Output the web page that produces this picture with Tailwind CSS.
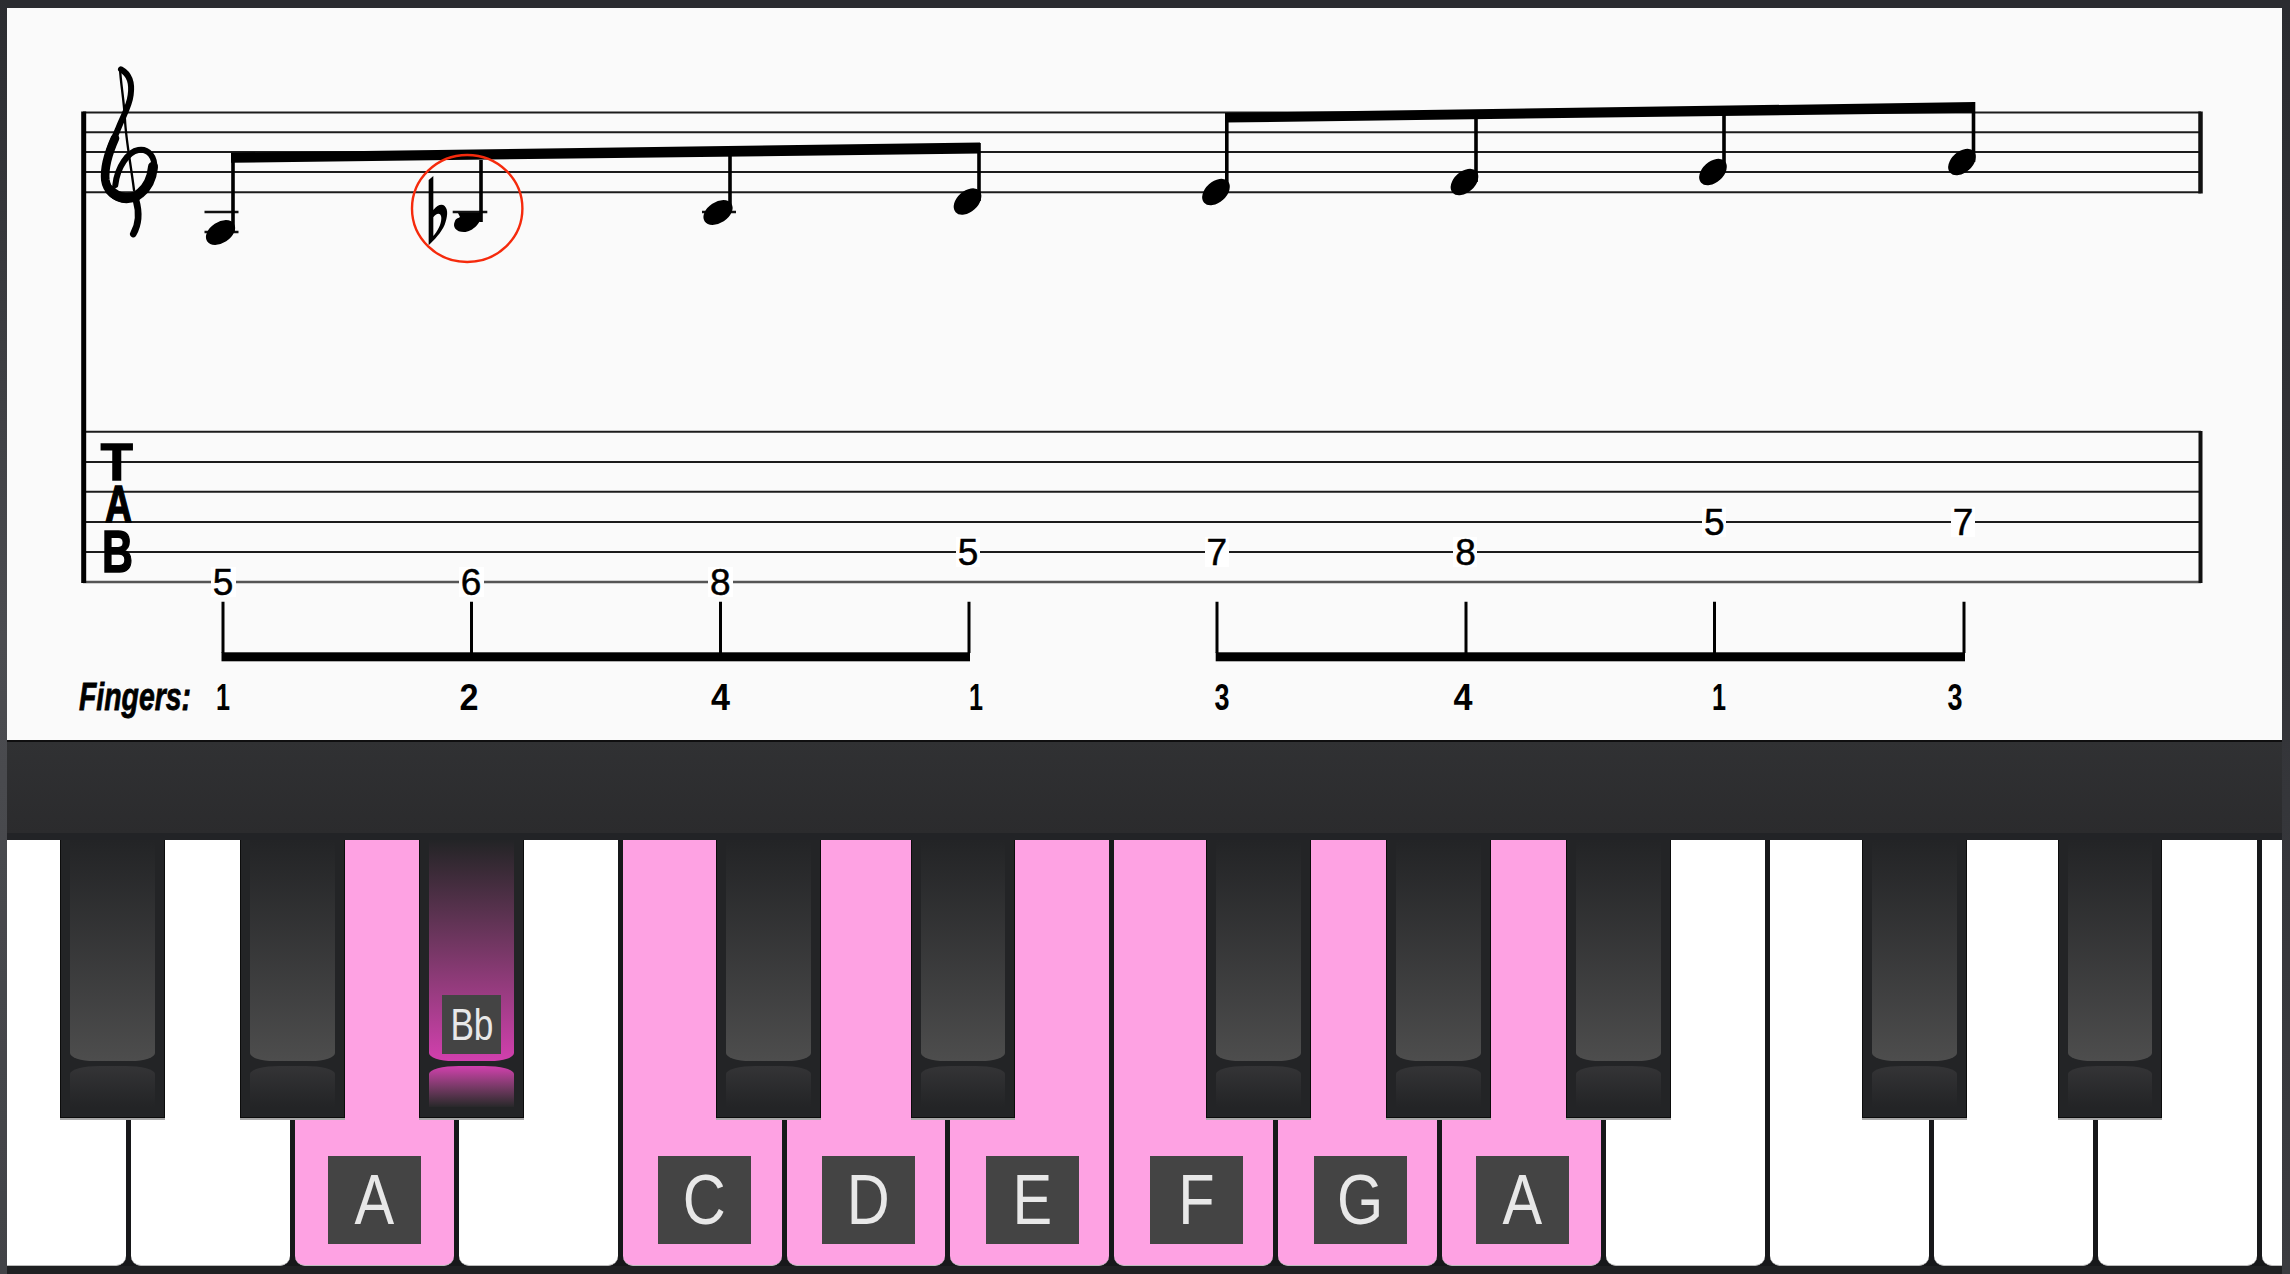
<!DOCTYPE html>
<html lang="en">
<head>
<meta charset="utf-8">
<title>A minor scale</title>
<script src="https://cdn.jsdelivr.net/npm/@tailwindcss/browser@4"></script>
</head>
<body class="bg-[#2b2c30]">
<div class="flex h-[1274px] w-[2290px] overflow-hidden bg-[#2b2c30] font-['Liberation_Sans',sans-serif]">
  <div class="w-[7px] shrink-0 bg-linear-to-b from-[#2b2c30] via-[#4b4c50] to-[#424347]"></div>
  <main class="flex w-[2275px] shrink-0 flex-col">
    <div class="h-[8px] bg-[#2b2c30]"></div>
    <section class="h-[734px] border-b-2 border-[#0f0f10] bg-[#fafafa]">
      <svg class="block h-[732px] w-[2275px] font-['Liberation_Sans',sans-serif]" viewBox="7 8 2275 732" xmlns="http://www.w3.org/2000/svg">
        <!-- staff -->
        <g stroke="#1c1c1c" stroke-width="2">
          <path d="M83 112.5H2201M83 132.3H2201M83 152H2201M83 172H2201M83 192.3H2201"/>
          <path d="M83 431.7H2201M83 462H2201M83 491.7H2201M83 522H2201M83 552H2201"/>
          <path stroke="#555" stroke-width="2.5" d="M83 582H2201"/>
        </g>
        <path d="M83.7 111.5V583" stroke="#000" stroke-width="5"/>
        <path d="M2200.5 111.5V193.5" stroke="#111" stroke-width="4.5"/>
        <path d="M2200.5 431V583" stroke="#111" stroke-width="4"/>
        <!-- clef -->
        <g transform="translate(60,50) scale(.3333)" fill="none" stroke="#000" stroke-linecap="round" stroke-linejoin="round">
          <path stroke-width="18" d="M183 58C208 72 217 100 212 135C208 170 190 195 173 240C160 270 150 290 145 310"/>
          <path stroke-width="26" d="M165 265C145 310 132 350 136 390C140 420 165 445 200 447"/>
          <path stroke-width="30" d="M150 420C175 448 215 452 240 430C265 410 276 380 279 350"/>
          <path stroke-width="18" d="M283 360C287 320 265 295 235 300C205 305 172 350 166 405"/>
          <path stroke-width="7" d="M180 55C182 100 192 150 195 210C198 270 212 340 222 420"/>
          <path stroke-width="20" d="M228 450C238 485 238 520 220 552"/>
        </g>
        <!-- ledger lines -->
        <path d="M204.5 212H238.5M204.5 232H238.5M452.7 212H487.3M702 212H736" stroke="#111" stroke-width="2.5"/>
        <!-- beams -->
        <path d="M231 152.7L980 142.5V153.5L231 162.7Z"/>
        <path d="M1225 113L1975 102V112.7L1225 122.5Z"/>
        <!-- stems -->
        <path d="M233 153V232M481 160V222M730 150V212M979 143V201M1226.8 113V192M1476 118V182M1724 113V172M1973.5 102V162" stroke="#000" stroke-width="3.6"/>
        <!-- note heads -->
        <g>
          <ellipse cx="220.5" cy="232.5" rx="16" ry="10.5" transform="rotate(-33 220.5 232.5)"/>
          <path d="M458 213H482C482 222 473 232 464 232C456 232 452 227 455 221C456 218 459 218 460 217Z"/>
          <ellipse cx="718" cy="212.5" rx="16" ry="10.5" transform="rotate(-33 718 212.5)"/>
          <ellipse cx="967.5" cy="201.5" rx="16" ry="10.5" transform="rotate(-42 967.5 201.5)"/>
          <ellipse cx="1216" cy="192" rx="16" ry="10.5" transform="rotate(-42 1216 192)"/>
          <ellipse cx="1464.5" cy="182" rx="16" ry="10.5" transform="rotate(-42 1464.5 182)"/>
          <ellipse cx="1713" cy="172" rx="16" ry="10.5" transform="rotate(-42 1713 172)"/>
          <ellipse cx="1962" cy="162" rx="16" ry="10.5" transform="rotate(-42 1962 162)"/>
        </g>
        <!-- flat -->
        <g transform="translate(380,130) scale(.3333)">
          <path fill-rule="evenodd" d="M146 150L160 138V240C172 224 186 220 194 228C206 240 202 262 194 284C184 308 162 330 146 346ZM160 262V318C172 304 184 284 184 264C184 248 170 246 160 262Z"/>
        </g>
        <!-- red circle -->
        <ellipse cx="467.2" cy="208.5" rx="55.2" ry="53.5" fill="none" stroke="#f52a0c" stroke-width="2.4"/>
        <!-- TAB -->
        <g fill="#000" stroke="#000" stroke-width="1.5" font-weight="700">
          <text x="100.7" y="480" font-size="52" textLength="32" lengthAdjust="spacingAndGlyphs">T</text>
          <text x="105" y="521.7" font-size="51" textLength="27" lengthAdjust="spacingAndGlyphs">A</text>
          <text x="102" y="571.7" font-size="60" textLength="31" lengthAdjust="spacingAndGlyphs">B</text>
        </g>
        <!-- tab digit plates -->
        <g fill="#fff">
          <rect x="211" y="567" width="25" height="30"/><rect x="459" y="567" width="25" height="30"/><rect x="708" y="567" width="25" height="30"/>
          <rect x="956" y="537" width="24" height="30"/><rect x="1205" y="537" width="24" height="30"/><rect x="1453" y="537" width="24" height="30"/>
          <rect x="1702" y="507" width="24" height="30"/><rect x="1951" y="507" width="24" height="30"/>
        </g>
        <g fill="#000" stroke="#000" stroke-width="0.5" font-size="37" text-anchor="middle">
          <text x="223" y="595">5</text>
          <text x="471" y="595">6</text>
          <text x="720.3" y="595">8</text>
          <text x="968" y="565">5</text>
          <text x="1216.7" y="565">7</text>
          <text x="1465.5" y="565">8</text>
          <text x="1714.3" y="535">5</text>
          <text x="1963" y="535">7</text>
        </g>
        <!-- brackets -->
        <path d="M223 601.7V653M471.5 601.7V653M720.5 601.7V653M969 601.7V653M1217 601.7V653M1466 601.7V653M1714.5 601.7V653M1964 601.7V653" stroke="#000" stroke-width="3"/>
        <rect x="221.5" y="652.3" width="748.5" height="9"/>
        <rect x="1215.7" y="652.3" width="749.3" height="9"/>
        <!-- fingers -->
        <text x="79" y="710" font-size="39" font-weight="700" font-style="italic" stroke="#000" stroke-width="0.8" textLength="112" lengthAdjust="spacingAndGlyphs">Fingers:</text>
        <g font-size="37" font-weight="700" text-anchor="middle">
          <text x="223" y="710" textLength="14" lengthAdjust="spacingAndGlyphs">1</text>
          <text x="469" y="710" textLength="19" lengthAdjust="spacingAndGlyphs">2</text>
          <text x="720.5" y="710" textLength="19" lengthAdjust="spacingAndGlyphs">4</text>
          <text x="976" y="710" textLength="14" lengthAdjust="spacingAndGlyphs">1</text>
          <text x="1222" y="710" textLength="15" lengthAdjust="spacingAndGlyphs">3</text>
          <text x="1463" y="710" textLength="19" lengthAdjust="spacingAndGlyphs">4</text>
          <text x="1719" y="710" textLength="14" lengthAdjust="spacingAndGlyphs">1</text>
          <text x="1955" y="710" textLength="15" lengthAdjust="spacingAndGlyphs">3</text>
        </g>
      </svg>
    </section>
    <div class="h-[91px] bg-linear-to-b from-[#303133] to-[#2b2b2d]"></div>
    <div class="h-[7px] bg-[#222326]"></div>

    <!-- keyboard -->
    <section class="relative h-[426px] overflow-hidden bg-[#17181a]">
      <div class="ml-[-39.9px] flex h-full w-[2500px] gap-[5px] text-[#e8e8e8]">
        <div class="h-full w-[158.9px] shrink-0 rounded-b-[10px] border-b border-[#bbb] bg-white"></div>
        <div class="h-full w-[158.9px] shrink-0 rounded-b-[10px] border-b border-[#bbb] bg-white"></div>
        <div class="flex h-full w-[158.9px] shrink-0 items-end justify-center rounded-b-[10px] border-b border-[#bbb] bg-[#fea2e3] pb-[21px]">
          <span class="flex h-[88px] w-[93px] items-center justify-center bg-[#444444] text-[70px]"><span class="scale-x-[0.85]">A</span></span>
        </div>
        <div class="h-full w-[158.9px] shrink-0 rounded-b-[10px] border-b border-[#bbb] bg-white"></div>
        <div class="flex h-full w-[158.9px] shrink-0 items-end justify-center rounded-b-[10px] border-b border-[#bbb] bg-[#fea2e3] pb-[21px] pl-[5px]">
          <span class="flex h-[88px] w-[93px] items-center justify-center bg-[#444444] text-[70px]"><span class="scale-x-[0.85]">C</span></span>
        </div>
        <div class="flex h-full w-[158.9px] shrink-0 items-end justify-center rounded-b-[10px] border-b border-[#bbb] bg-[#fea2e3] pb-[21px] pl-[5px]">
          <span class="flex h-[88px] w-[93px] items-center justify-center bg-[#444444] text-[70px]"><span class="scale-x-[0.85]">D</span></span>
        </div>
        <div class="flex h-full w-[158.9px] shrink-0 items-end justify-center rounded-b-[10px] border-b border-[#bbb] bg-[#fea2e3] pb-[21px] pl-[5px]">
          <span class="flex h-[88px] w-[93px] items-center justify-center bg-[#444444] text-[70px]"><span class="scale-x-[0.85]">E</span></span>
        </div>
        <div class="flex h-full w-[158.9px] shrink-0 items-end justify-center rounded-b-[10px] border-b border-[#bbb] bg-[#fea2e3] pb-[21px] pl-[5px]">
          <span class="flex h-[88px] w-[93px] items-center justify-center bg-[#444444] text-[70px]"><span class="scale-x-[0.85]">F</span></span>
        </div>
        <div class="flex h-full w-[158.9px] shrink-0 items-end justify-center rounded-b-[10px] border-b border-[#bbb] bg-[#fea2e3] pb-[21px] pl-[5px]">
          <span class="flex h-[88px] w-[93px] items-center justify-center bg-[#444444] text-[70px]"><span class="scale-x-[0.85]">G</span></span>
        </div>
        <div class="flex h-full w-[158.9px] shrink-0 items-end justify-center rounded-b-[10px] border-b border-[#bbb] bg-[#fea2e3] pb-[21px] pl-[2px]">
          <span class="flex h-[88px] w-[93px] items-center justify-center bg-[#444444] text-[70px]"><span class="scale-x-[0.85]">A</span></span>
        </div>
        <div class="h-full w-[158.9px] shrink-0 rounded-b-[10px] border-b border-[#bbb] bg-white"></div>
        <div class="h-full w-[158.9px] shrink-0 rounded-b-[10px] border-b border-[#bbb] bg-white"></div>
        <div class="h-full w-[158.9px] shrink-0 rounded-b-[10px] border-b border-[#bbb] bg-white"></div>
        <div class="h-full w-[158.9px] shrink-0 rounded-b-[10px] border-b border-[#bbb] bg-white"></div>
        <div class="h-full w-[158.9px] shrink-0 rounded-b-[10px] border-b border-[#bbb] bg-white"></div>
      </div>

      <!-- black keys -->
      <div class="absolute top-0 left-[53px] flex h-[278px] w-[105px] flex-col border-x border-b border-[#0c0c0c] bg-[#232426] px-[9px] pb-[10px] shadow-[0_2px_0_#a8a8a8]">
        <div class="h-[221px] rounded-b-[24px_8px] bg-linear-to-b from-[#232426] to-[#4d4d4d]"></div>
        <div class="mt-[5px] flex-1 rounded-t-[30px_8px] bg-linear-to-b from-[#343436] to-[#232426]"></div>
      </div>
      <div class="absolute top-0 left-[233px] flex h-[278px] w-[105px] flex-col border-x border-b border-[#0c0c0c] bg-[#232426] px-[9px] pb-[10px] shadow-[0_2px_0_#a8a8a8]">
        <div class="h-[221px] rounded-b-[24px_8px] bg-linear-to-b from-[#232426] to-[#4d4d4d]"></div>
        <div class="mt-[5px] flex-1 rounded-t-[30px_8px] bg-linear-to-b from-[#343436] to-[#232426]"></div>
      </div>
      <div class="absolute top-0 left-[412px] flex h-[278px] w-[105px] flex-col border-x border-b border-[#0c0c0c] bg-[#232426] px-[9px] pb-[10px] shadow-[0_2px_0_#a8a8a8]">
        <div class="relative h-[221px] rounded-b-[24px_8px] bg-linear-to-b from-[#232426] to-[#d23fae]">
          <span class="absolute top-[155px] left-[13px] flex h-[59px] w-[59px] items-center justify-center bg-[#444444] text-[44px] text-[#e8e8e8]"><span class="scale-x-[0.8]">Bb</span></span>
        </div>
        <div class="mt-[5px] flex-1 rounded-t-[30px_8px] bg-linear-to-b from-[#d23fae] to-[#28282a]"></div>
      </div>
      <div class="absolute top-0 left-[709px] flex h-[278px] w-[105px] flex-col border-x border-b border-[#0c0c0c] bg-[#232426] px-[9px] pb-[10px] shadow-[0_2px_0_#a8a8a8]">
        <div class="h-[221px] rounded-b-[24px_8px] bg-linear-to-b from-[#232426] to-[#4d4d4d]"></div>
        <div class="mt-[5px] flex-1 rounded-t-[30px_8px] bg-linear-to-b from-[#343436] to-[#232426]"></div>
      </div>
      <div class="absolute top-0 left-[904px] flex h-[278px] w-[104px] flex-col border-x border-b border-[#0c0c0c] bg-[#232426] px-[9px] pb-[10px] shadow-[0_2px_0_#a8a8a8]">
        <div class="h-[221px] rounded-b-[24px_8px] bg-linear-to-b from-[#232426] to-[#4d4d4d]"></div>
        <div class="mt-[5px] flex-1 rounded-t-[30px_8px] bg-linear-to-b from-[#343436] to-[#232426]"></div>
      </div>
      <div class="absolute top-0 left-[1199px] flex h-[278px] w-[105px] flex-col border-x border-b border-[#0c0c0c] bg-[#232426] px-[9px] pb-[10px] shadow-[0_2px_0_#a8a8a8]">
        <div class="h-[221px] rounded-b-[24px_8px] bg-linear-to-b from-[#232426] to-[#4d4d4d]"></div>
        <div class="mt-[5px] flex-1 rounded-t-[30px_8px] bg-linear-to-b from-[#343436] to-[#232426]"></div>
      </div>
      <div class="absolute top-0 left-[1379px] flex h-[278px] w-[105px] flex-col border-x border-b border-[#0c0c0c] bg-[#232426] px-[9px] pb-[10px] shadow-[0_2px_0_#a8a8a8]">
        <div class="h-[221px] rounded-b-[24px_8px] bg-linear-to-b from-[#232426] to-[#4d4d4d]"></div>
        <div class="mt-[5px] flex-1 rounded-t-[30px_8px] bg-linear-to-b from-[#343436] to-[#232426]"></div>
      </div>
      <div class="absolute top-0 left-[1559px] flex h-[278px] w-[105px] flex-col border-x border-b border-[#0c0c0c] bg-[#232426] px-[9px] pb-[10px] shadow-[0_2px_0_#a8a8a8]">
        <div class="h-[221px] rounded-b-[24px_8px] bg-linear-to-b from-[#232426] to-[#4d4d4d]"></div>
        <div class="mt-[5px] flex-1 rounded-t-[30px_8px] bg-linear-to-b from-[#343436] to-[#232426]"></div>
      </div>
      <div class="absolute top-0 left-[1855px] flex h-[278px] w-[105px] flex-col border-x border-b border-[#0c0c0c] bg-[#232426] px-[9px] pb-[10px] shadow-[0_2px_0_#a8a8a8]">
        <div class="h-[221px] rounded-b-[24px_8px] bg-linear-to-b from-[#232426] to-[#4d4d4d]"></div>
        <div class="mt-[5px] flex-1 rounded-t-[30px_8px] bg-linear-to-b from-[#343436] to-[#232426]"></div>
      </div>
      <div class="absolute top-0 left-[2051px] flex h-[278px] w-[104px] flex-col border-x border-b border-[#0c0c0c] bg-[#232426] px-[9px] pb-[10px] shadow-[0_2px_0_#a8a8a8]">
        <div class="h-[221px] rounded-b-[24px_8px] bg-linear-to-b from-[#232426] to-[#4d4d4d]"></div>
        <div class="mt-[5px] flex-1 rounded-t-[30px_8px] bg-linear-to-b from-[#343436] to-[#232426]"></div>
      </div>
    </section>
    <div class="h-[8px] bg-[#1f2022]"></div>
  </main>
  <div class="w-[8px] shrink-0 bg-linear-to-b from-[#2b2c30] to-[#3b3c40]"></div>
</div>
</body>
</html>
